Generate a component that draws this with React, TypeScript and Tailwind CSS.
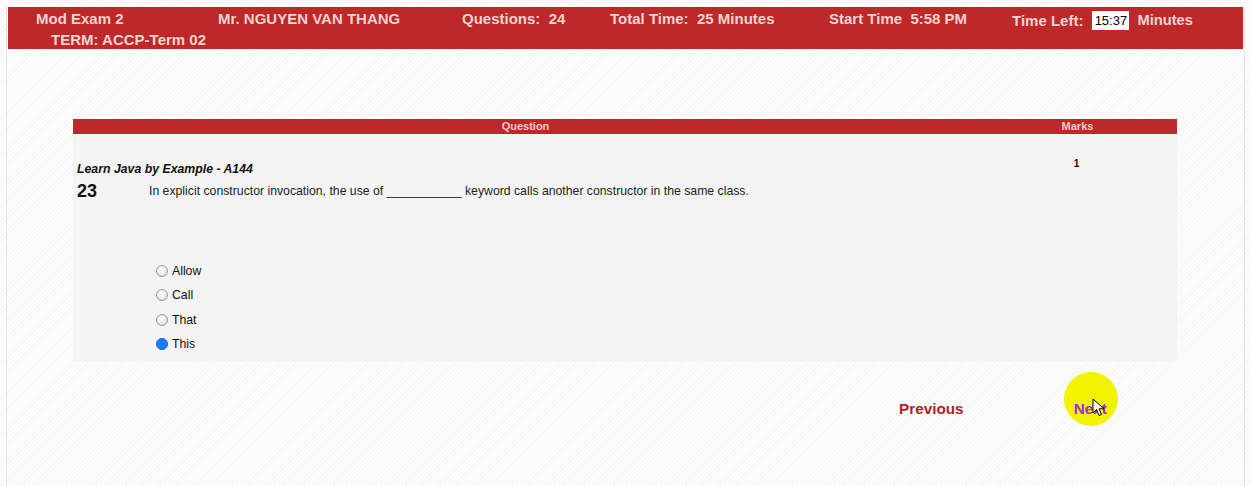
import React from "react";

function Radio({ checked }: { checked?: boolean }) {
  if (checked) {
    return (
      <span className="inline-block w-[12px] h-[12px] rounded-full bg-[#1a7cf2] border border-[#1669d6] shrink-0" />
    );
  }
  return (
    <span className="inline-block w-[12px] h-[12px] rounded-full border border-[#9a9a9a] bg-[radial-gradient(circle_at_40%_35%,#ffffff_0%,#e8e8e8_55%,#cfcfcf_100%)] shrink-0" />
  );
}

export default function App() {
  const options = [
    { label: "Allow", checked: false },
    { label: "Call", checked: false },
    { label: "That", checked: false },
    { label: "This", checked: true },
  ];
  return (
    <div
      className="w-[1251px] h-[486px] overflow-hidden bg-[repeating-linear-gradient(135deg,#f6f6f6_0px,#f6f6f6_1px,#fdfdfd_1px,#fdfdfd_3px)] pt-[7px]"
      style={{ fontFamily: '"Liberation Sans", Arial, sans-serif' }}
    >
      <div className="mx-[6px] h-[480px] border-x border-[#e4e4e4] px-[1px]">
        {/* Header */}
        <div className="h-[42px] bg-[#be2828] text-[#f3d3d3] font-bold text-[15px] leading-[17px]">
          <div className="flex items-start pt-[3px] pl-[28px]">
            <div className="w-[182px] leading-[18px]">Mod Exam 2</div>
            <div className="w-[244px] leading-[18px]">Mr. NGUYEN VAN THANG</div>
            <div className="w-[148px] leading-[18px] whitespace-pre">Questions:  24</div>
            <div className="w-[219px] leading-[18px] whitespace-pre">Total Time:  25 Minutes</div>
            <div className="w-[183px] leading-[18px] whitespace-pre">Start Time  5:58 PM</div>
            <div className="flex items-center h-[19px] mt-[1px]">
              <span>Time Left:</span>
              <span className="ml-[9px] h-[19px] w-[37px] bg-white text-black font-normal text-[13px] flex items-center justify-center">
                15:37
              </span>
              <span className="ml-[8px] text-[14.7px]">Minutes</span>
            </div>
          </div>
          <div className="pl-[43px] mt-[1px] leading-[18px]">TERM: ACCP-Term 02</div>
        </div>

        {/* Question table */}
        <div className="ml-[65px] w-[1104px] mt-[70px]">
          <div className="flex h-[15px] bg-[#be2828] text-[#f3cccc] font-bold text-[11px] leading-[15px]">
            <div className="w-[905px] text-center">Question</div>
            <div className="flex-1 text-center">Marks</div>
          </div>
          <div className="flex bg-[#f4f4f4] h-[228px]">
            <div className="w-[905px] pl-[4px] pt-[28px]">
              <div className="font-bold italic text-[12.3px] leading-[14px] text-[#111]">
                Learn Java by Example - A144
              </div>
              <div className="flex items-center mt-[4px] h-[22px]">
                <div className="w-[72px] font-bold text-[18px] leading-[22px] text-[#111]">23</div>
                <div className="text-[12.25px] leading-[14px] text-[#222]">
                  In explicit constructor invocation, the use of ___________ keyword calls another constructor in the same class.
                </div>
              </div>
              <div className="mt-[62px] pl-[79px] flex flex-col gap-[10.33px]">
                {options.map((o) => (
                  <div key={o.label} className="flex items-center h-[14px] gap-[4px]">
                    <Radio checked={o.checked} />
                    <span className="text-[12.25px] leading-[14px] text-[#111]">{o.label}</span>
                  </div>
                ))}
              </div>
            </div>
            <div className="flex-1 pt-[24px]">
              <div className="text-center font-bold text-[10px] leading-[12px] text-[#111] pr-[2px]">1</div>
            </div>
          </div>

          {/* Navigation */}
          <div className="flex items-center mt-[37px] h-[20px]">
            <span className="ml-[826px] font-bold text-[15.3px] leading-[20px] text-[#b0222a]">Previous</span>
            <span className="relative ml-[110px] font-bold text-[15.3px] leading-[20px] text-[#a030c8]">
              <span className="absolute left-[-10px] top-[-27px] w-[54px] h-[54px] rounded-full bg-[#f3f300]" />
              <span className="relative">Next</span>
              <svg
                className="absolute left-[18px] top-[-1px]"
                width="14"
                height="20"
                viewBox="0 0 14 20"
              >
                <path
                  d="M1 1 L1 15 L4.5 11.5 L7 17.5 L9.5 16.5 L7 10.8 L12 10.8 Z"
                  fill="white"
                  stroke="black"
                  strokeWidth="1"
                  strokeLinejoin="round"
                />
              </svg>
            </span>
          </div>
        </div>
      </div>
    </div>
  );
}
